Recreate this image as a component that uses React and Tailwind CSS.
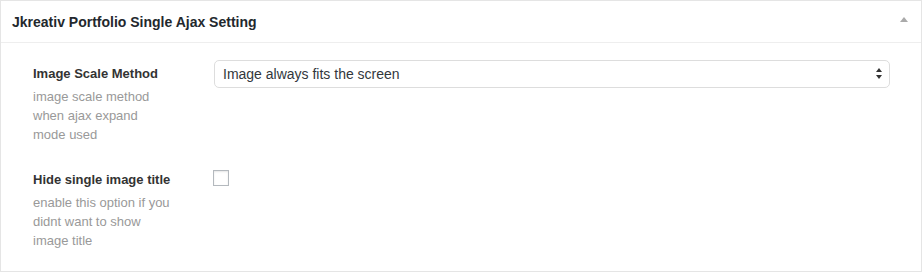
import React from 'react';

function Field({ label, lines, children, className }) {
  return (
    <div className={`flex ${className || ''}`}>
      <div className="w-[181px] shrink-0">
        <div className="pt-[4px] text-[13px] leading-[19px] font-bold text-[#333]">{label}</div>
        <div className="mt-[4px] text-[13px] leading-[19px] text-[#999]">
          {lines.map((l, i) => <div key={i}>{l}</div>)}
        </div>
      </div>
      <div className="flex-1">{children}</div>
    </div>
  );
}

export default function App() {
  return (
    <div className="w-[922px] h-[272px] bg-white border border-[#e5e5e5] font-['Liberation_Sans','Helvetica',sans-serif]">
      {/* header */}
      <div className="h-[42px] border-b border-[#eeeeee] flex items-center justify-between pl-[11px] pr-[13px]">
        <div className="text-[14px] font-bold text-[#23282d] pt-[1px]">Jkreativ Portfolio Single Ajax Setting</div>
        <svg width="8" height="5" viewBox="0 0 8 5" className="mt-[-4px]">
          <polygon points="4,0 8,5 0,5" fill="#aaaaaa" />
        </svg>
      </div>

      <div className="pt-[17px] pl-[32px] pr-[31px]">
        <Field label="Image Scale Method" lines={['image scale method', 'when ajax expand', 'mode used']}>
          <div className="h-[28px] border border-[#dddddd] rounded-[5px] bg-white flex items-center justify-between pl-[8px] pr-[7px]">
            <span className="text-[14px] text-[#32373c]">Image always fits the screen</span>
            <svg width="6" height="12" viewBox="0 0 6 12">
              <polygon points="3,0 6,4 0,4" fill="#333" />
              <polygon points="0,7 6,7 3,11" fill="#333" />
            </svg>
          </div>
        </Field>

        <Field className="mt-[22px]" label="Hide single image title" lines={['enable this option if you', 'didnt want to show', 'image title']}>
          <div className="w-[16px] h-[16px] mt-[4px] ml-[-1px] border border-[#b4b9be] bg-white shadow-[inset_0_1px_2px_rgba(0,0,0,0.1)]" />
        </Field>
      </div>
    </div>
  );
}
